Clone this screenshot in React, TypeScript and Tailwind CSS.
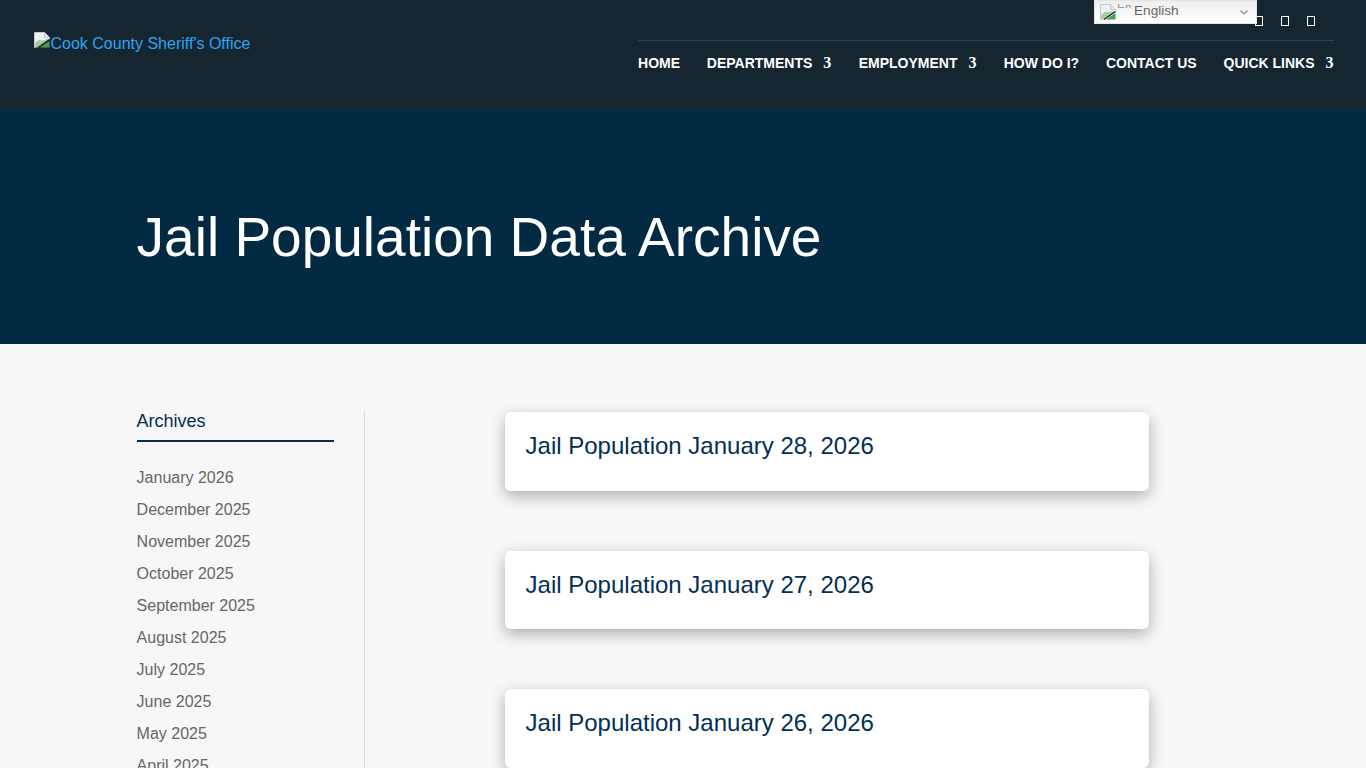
const font = { fontFamily: '"Liberation Sans", Arial, sans-serif' };

const months = [
  "January 2026",
  "December 2025",
  "November 2025",
  "October 2025",
  "September 2025",
  "August 2025",
  "July 2025",
  "June 2025",
  "May 2025",
  "April 2025",
];

const navItems = [
  { label: "HOME", more: false },
  { label: "DEPARTMENTS", more: true },
  { label: "EMPLOYMENT", more: true },
  { label: "HOW DO I?", more: false },
  { label: "CONTACT US", more: false },
  { label: "QUICK LINKS", more: true },
];

const posts = ["Jail Population January 28, 2026", "Jail Population January 27, 2026", "Jail Population January 26, 2026"];

function BrokenImage() {
  return (
    <svg width="16" height="16" viewBox="0 0 16 16" className="shrink-0">
      <path d="M0.5 0.5H10.5L15.5 5.5V7L0.5 15.5Z" fill="#eef2f6" stroke="#c3c9cf" />
      <path d="M10.5 0.5V5.5H15.5" fill="#e3e7eb" stroke="#c3c9cf" />
      <path d="M1 12C3 8 6 7 8 8.5L13 7L15.5 7.5L5 15.5H1Z" fill="#a6cf9c" />
      <path d="M6 15.5L15.5 9V15.5Z" fill="#4f9a58" />
      <path d="M4 15.5L15.5 7.5" stroke="#17262f" strokeWidth="1.2" />
    </svg>
  );
}

export default function App() {
  return (
    <div className="relative h-[768px] overflow-hidden bg-[#f7f7f7]" style={font}>
      <header className="flex h-[109px] justify-between bg-[#162631] pl-[34px] pr-[32px]">
        <a className="flex h-fit items-start pt-[32px] text-base leading-[23px] text-[#2ea3f2]">
          <BrokenImage />
          <span className="ml-[0.5px]">Cook County Sheriff's Office</span>
        </a>
        <div className="flex flex-col">
          <div className="flex h-[40px] items-start justify-end gap-[18px] pr-[19px] pt-[16px]">
            <span className="h-[10px] w-[8px] border-[1.5px] border-white" />
            <span className="h-[10px] w-[8px] border-[1.5px] border-white" />
            <span className="h-[10px] w-[8px] border-[1.5px] border-white" />
          </div>
          <nav className="flex gap-[26.8px] border-t border-[#2f3f49] pt-[13px]">
            {navItems.map((item) => (
              <a key={item.label} className="flex h-[18px] items-center text-sm font-bold leading-[18px] text-white">
                {item.label}
                {item.more && (
                  <span className="ml-[11px] w-[8.5px] text-base font-bold leading-[18px]" style={{ fontFamily: '"Liberation Serif", serif' }}>
                    3
                  </span>
                )}
              </a>
            ))}
          </nav>
        </div>
      </header>

      {/* language switcher sits over the header */}
      <div className="absolute left-[1094px] top-0 flex h-[24px] w-[163px] items-center border border-[#e5e5e5] bg-gradient-to-b from-[#eeeeee] to-white pl-[5px] text-[13.6px] text-[#666666]">
        <BrokenImage />
        <span className="ml-[1px] mb-[12px] block h-[4px] w-[14px] overflow-hidden text-xs leading-[9px] text-[#999999]">En</span>
        <span className="ml-[3px] mb-[2px]">English</span>
        <svg width="8" height="5" viewBox="0 0 8 5" className="ml-auto mr-[8px] mt-[1px]">
          <path d="M0.5 0.5L4 4L7.5 0.5" fill="none" stroke="#888888" strokeWidth="1.2" />
        </svg>
      </div>

      <section className="flex h-[235px] items-center bg-[#022a42] pl-[136.6px] pt-[20px]">
        <h1 className="text-[55px] leading-[64px] text-white">Jail Population Data Archive</h1>
      </section>

      <main className="flex pl-[136.6px] pt-[68px]">
        <aside className="w-[228.4px] shrink-0 border-r border-[#dddddd] pr-[30px]">
          <h2 className="border-b-2 border-[#022f55] pb-[10px] text-lg leading-[18px] text-[#022f55]">Archives</h2>
          <ul className="mt-[20px]">
            {months.map((m) => (
              <li key={m} className="text-base leading-[32px] text-[#666666]">
                {m}
              </li>
            ))}
          </ul>
        </aside>
        <div className="ml-[140px] flex w-[644px] flex-col gap-[60px]">
          {posts.map((p) => (
            <article key={p} className="h-[78.5px] shrink-0 rounded-md bg-white px-[20.6px] pt-[19px] shadow-[0_5px_15px_rgba(0,0,0,0.3)]">
              <h3 className="text-2xl leading-[30px] text-[#022f55]">{p}</h3>
            </article>
          ))}
        </div>
      </main>
    </div>
  );
}
